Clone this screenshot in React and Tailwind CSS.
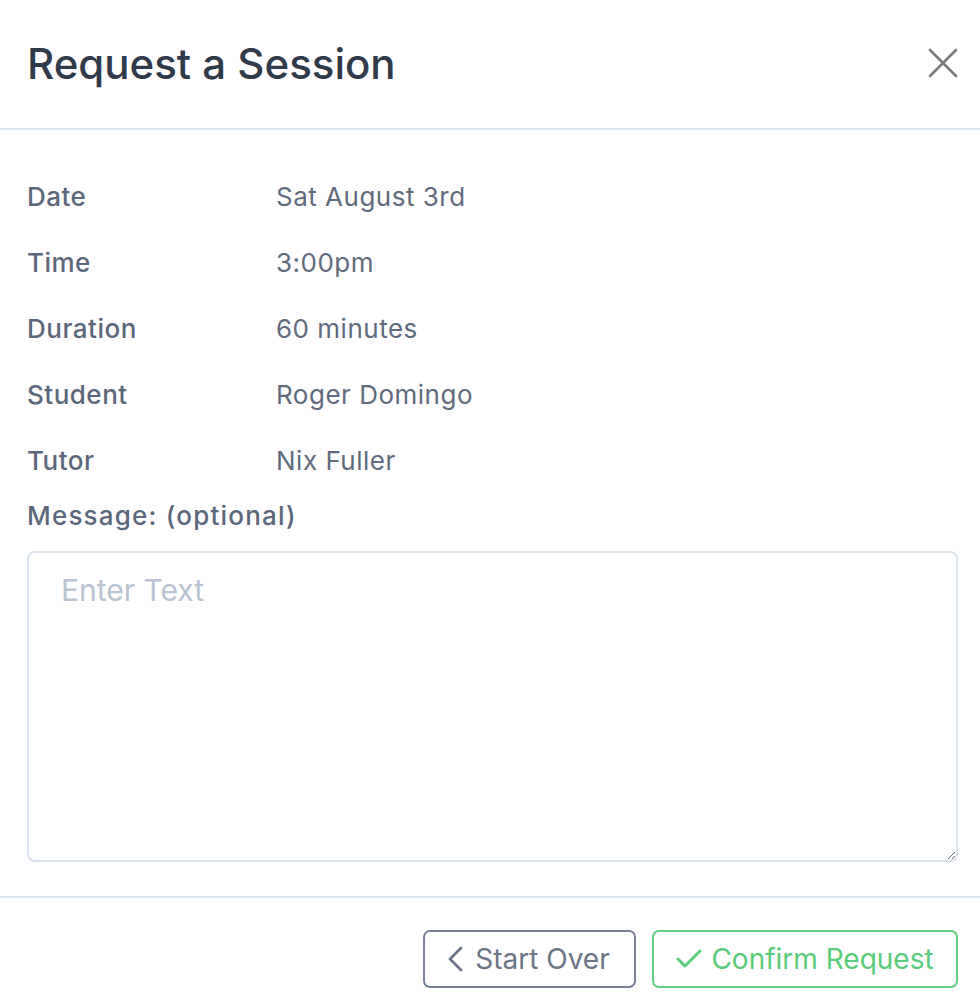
import React from "react";

const details = [
  { label: "Date", value: "Sat August 3rd" },
  { label: "Time", value: "3:00pm" },
  { label: "Duration", value: "60 minutes" },
  { label: "Student", value: "Roger Domingo" },
  { label: "Tutor", value: "Nix Fuller" },
];

export default function App() {
  return (
    <div
      className="w-[980px] h-[1004px] bg-white flex flex-col overflow-hidden"
      style={{ fontFamily: "Inter, 'Noto Sans', sans-serif" }}
    >
      {/* Header */}
      <div className="h-[130px] shrink-0 flex items-center justify-between pl-[27px] pr-[22px] border-b-2 border-[#dbe3ec]">
        <h1 className="text-[42px] font-medium text-[#2f3a4a] mb-[2px]">
          Request a Session
        </h1>
        <button className="text-[#7a7a7a] mb-[2px]">
          <svg width="30" height="30" viewBox="0 0 30 30" fill="none" stroke="currentColor" strokeWidth="2.6" strokeLinecap="round">
            <path d="M2 2 L28 28 M28 2 L2 28" />
          </svg>
        </button>
      </div>

      {/* Body */}
      <div className="flex flex-col pl-[27px] pr-[22px] pt-[33px] pb-[34px] border-b-2 border-[#dbe3ec]">
        {details.map((d) => (
          <div key={d.label} className="flex h-[66px] items-center text-[26px] tracking-[0.5px]">
            <div className="w-[249px] font-medium text-[#5b677a]">{d.label}</div>
            <div className="text-[#5f6b7c]">{d.value}</div>
          </div>
        ))}
        <div className="h-[36px] mt-[4px] flex items-center text-[26px] tracking-[1.2px] font-medium text-[#5b677a]">
          Message: (optional)
        </div>
        <textarea
          placeholder="Enter Text"
          className="mt-[18px] h-[311px] w-full border-2 border-[#dae3ee] rounded-[8px] px-[32px] py-[15px] text-[30px] text-[#4a5568] placeholder:text-[#b9c3d1] outline-none resize"
        />
      </div>

      {/* Footer */}
      <div className="flex-1 flex items-start justify-end gap-[16px] pr-[22px] pt-[32px]">
        <button className="h-[58px] w-[213px] flex items-center justify-center gap-[12px] border-2 border-[#788296] rounded-[7px] text-[28px] text-[#6b7587]">
          <svg width="16" height="26" viewBox="0 0 16 26" fill="none" stroke="currentColor" strokeWidth="2.8" strokeLinecap="round" strokeLinejoin="round" className="-ml-[2px]">
            <path d="M14 2 L3 13 L14 24" />
          </svg>
          Start Over
        </button>
        <button className="h-[58px] w-[306px] flex items-center justify-center gap-[9px] border-2 border-[#62cd80] rounded-[7px] text-[28px] text-[#5acb7a]">
          <svg width="26" height="20" viewBox="0 0 26 20" fill="none" stroke="currentColor" strokeWidth="3" strokeLinecap="round" strokeLinejoin="round">
            <path d="M2 10 L9 17 L24 2" />
          </svg>
          Confirm Request
        </button>
      </div>
    </div>
  );
}
